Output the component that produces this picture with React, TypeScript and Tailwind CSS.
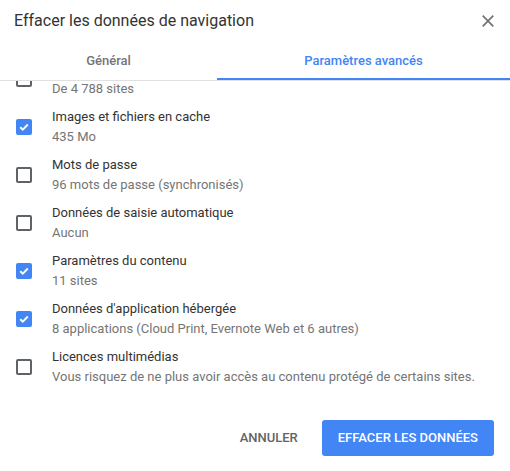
import React from "react";

type Item = { label: string; sub: string; checked: boolean };

const items: Item[] = [
  { label: "", sub: "De 4 788 sites", checked: false },
  { label: "Images et fichiers en cache", sub: "435 Mo", checked: true },
  { label: "Mots de passe", sub: "96 mots de passe (synchronisés)", checked: false },
  { label: "Données de saisie automatique", sub: "Aucun", checked: false },
  { label: "Paramètres du contenu", sub: "11 sites", checked: true },
  { label: "Données d'application hébergée", sub: "8 applications (Cloud Print, Evernote Web et 6 autres)", checked: true },
  { label: "Licences multimédias", sub: "Vous risquez de ne plus avoir accès au contenu protégé de certains sites.", checked: false },
];

function Checkbox({ checked }: { checked: boolean }) {
  if (checked) {
    return (
      <div className="w-[16px] h-[16px] rounded-[2px] bg-[#4285f4] flex items-center justify-center shrink-0">
        <svg width="12" height="12" viewBox="0 0 12 12">
          <path d="M2.2 6.2 L4.8 8.7 L9.8 3.5" fill="none" stroke="#ffffff" strokeWidth="1.9" />
        </svg>
      </div>
    );
  }
  return <div className="w-[16px] h-[16px] rounded-[2px] border-2 border-[#5f6368] shrink-0" />;
}

export default function App() {
  return (
    <div className="w-[510px] h-[471px] bg-white overflow-hidden flex flex-col" style={{ fontFamily: "Roboto, 'Noto Sans', sans-serif" }}>
      <div className="h-[41px] flex items-center justify-between pl-[14px] pr-[16px] shrink-0">
        <div className="text-[16px] text-[#333333] leading-[20px]">Effacer les données de navigation</div>
        <svg width="12" height="12" viewBox="0 0 12 12" className="mt-[1px]">
          <path d="M0.7 0.7 L11.3 11.3 M11.3 0.7 L0.7 11.3" stroke="#757575" strokeWidth="1.8" />
        </svg>
      </div>
      <div className="flex border-b border-[#e0e0e0] shrink-0 relative z-10 bg-white">
        <div className="relative w-[217px] h-[39px] flex items-center justify-center text-[13px] font-medium text-[#757575]">
          Général
        </div>
        <div className="relative flex-1 h-[39px] flex items-center justify-center text-[13px] font-medium text-[#4285f4]">
          Paramètres avancés
          <div className="absolute left-0 right-0 bottom-0 h-[2px] bg-[#4285f4]" />
        </div>
      </div>
      <div className="h-[323px] overflow-hidden shrink-0">
        <div className="-mt-[26px]">
          {items.map((it, i) => (
            <div key={i} className="h-[48px] flex items-center pl-[16px] gap-[20px]">
              <Checkbox checked={it.checked} />
              <div className="flex flex-col text-[13px] leading-[20px]">
                <div className="text-[#333333] h-[20px]">{it.label}</div>
                <div className="text-[#757575]">{it.sub}</div>
              </div>
            </div>
          ))}
        </div>
      </div>
      <div className="flex justify-end items-center gap-[8px] pt-[16px] pr-[16px]">
        <button className="h-[36px] px-[16px] text-[13px] font-medium text-[#646464] rounded-[3px]">ANNULER</button>
        <button className="h-[36px] px-[16px] text-[13px] font-medium text-white bg-[#4285f4] rounded-[3px]">
          EFFACER LES DONNÉES
        </button>
      </div>
    </div>
  );
}
